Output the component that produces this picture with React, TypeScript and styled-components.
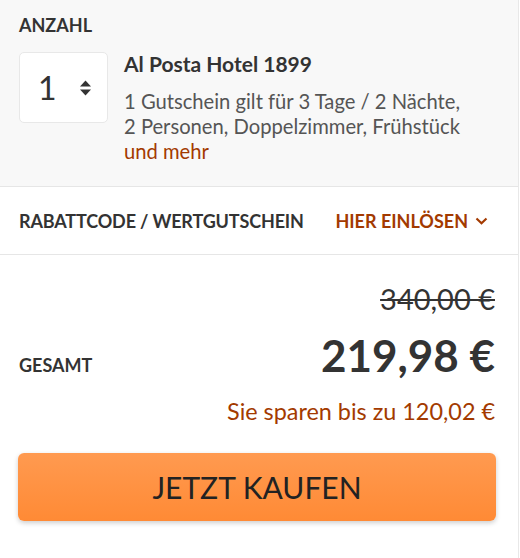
import * as React from 'react'
import styled, { createGlobalStyle } from 'styled-components'

const GlobalStyle = createGlobalStyle`
  html, body {
    margin: 0;
    padding: 0;
    background: #fff;
  }
  body {
    font-family: Lato, "Open Sans", sans-serif;
    color: #333;
  }
`

const Panel = styled.div`
  width: 519px;
  border-right: 1px solid #e8e8e8;
  box-sizing: border-box;
  min-height: 558px;
`

const Section = styled.div<{ $grey?: boolean }>`
  background: ${p => (p.$grey ? '#f8f8f8' : '#fff')};
  border-bottom: 1px solid #e6e6e6;
  padding: ${p => (p.$grey ? '14px 19px 22px' : '0 19px')};
`

const Label = styled.div<{ $tight?: boolean }>`
  font-size: 18px;
  font-weight: 700;
  color: #333;
  line-height: 22px;
  letter-spacing: ${p => (p.$tight ? '-0.15px' : '0')};
`

const ItemRow = styled.div`
  display: flex;
  gap: 16px;
  margin-top: 16px;
`

const QtyBox = styled.div`
  width: 89px;
  height: 71px;
  flex: none;
  box-sizing: border-box;
  background: #fff;
  border: 1px solid #e8e8e8;
  border-radius: 5px;
  display: flex;
  align-items: center;
  padding-left: 18px;
  gap: 22px;
  font-size: 32px;
  line-height: 1;
  color: #333;
`

const ItemInfo = styled.div``

const ItemTitle = styled.div`
  font-size: 21px;
  font-weight: 700;
  color: #333;
  line-height: 24px;
`

const ItemText = styled.div`
  margin-top: 13px;
  font-size: 20.2px;
  line-height: 25px;
  color: #555;
`

const MoreLink = styled.span`
  color: #a33a00;
`

const CodeRow = styled.div`
  display: flex;
  align-items: center;
  justify-content: space-between;
  height: 67px;
  padding-right: 11px;
`

const CodeLink = styled.div`
  display: flex;
  align-items: center;
  gap: 7px;
  font-size: 18px;
  line-height: 22px;
  font-weight: 700;
  color: #a33a00;
`

const TotalSection = styled.div`
  padding: 27px 23px 0 19px;
`

const TotalRow = styled.div`
  display: flex;
  justify-content: space-between;
  align-items: flex-end;
`

const TotalLabel = styled.div`
  font-size: 18px;
  line-height: 22px;
  font-weight: 700;
  color: #333;
  padding-bottom: 5px;
`

const Prices = styled.div`
  display: flex;
  flex-direction: column;
  align-items: flex-end;
`

const OldPrice = styled.div`
  font-size: 29px;
  line-height: 34px;
  color: #333;
  text-decoration: line-through;
  text-decoration-thickness: 2px;
`

const NewPrice = styled.div`
  font-size: 44px;
  font-weight: 700;
  line-height: 52px;
  margin-top: 13px;
  color: #333;
`

const Savings = styled.div`
  text-align: right;
  font-size: 23.4px;
  line-height: 28px;
  color: #a33a00;
  margin-top: 16px;
`

const BuyButton = styled.button`
  display: block;
  width: 478px;
  height: 68px;
  margin: 28px 0 0 18px;
  border: none;
  border-radius: 6px;
  background: linear-gradient(#ff9a50, #ff8a35);
  box-shadow: 0 2px 5px rgba(0, 0, 0, 0.2);
  font-family: Lato, sans-serif;
  font-size: 30px;
  color: #222;
`

const Spinner = () => (
  <svg width="13" height="16" viewBox="0 0 13 16">
    <path d="M6.5 0.5 L12 6.5 H1 Z" fill="#333" />
    <path d="M6.5 15.5 L12 9.5 H1 Z" fill="#333" />
  </svg>
)

const Chevron = () => (
  <svg width="13" height="8" viewBox="0 0 13 8">
    <path d="M1.5 1.5 L6.5 6.2 L11.5 1.5" fill="none" stroke="#a33a00" strokeWidth="2.2" />
  </svg>
)

export default function App() {
  return (
    <>
      <GlobalStyle />
      <Panel>
        <Section $grey>
          <Label>ANZAHL</Label>
          <ItemRow>
            <QtyBox>
              <span>1</span>
              <Spinner />
            </QtyBox>
            <ItemInfo>
              <ItemTitle>Al Posta Hotel 1899</ItemTitle>
              <ItemText>
                1 Gutschein gilt für 3 Tage / 2 Nächte,
                <br />
                2 Personen, Doppelzimmer, Frühstück
                <br />
                <MoreLink>und mehr</MoreLink>
              </ItemText>
            </ItemInfo>
          </ItemRow>
        </Section>
        <Section>
          <CodeRow>
            <Label $tight>RABATTCODE / WERTGUTSCHEIN</Label>
            <CodeLink>
              HIER EINLÖSEN
              <Chevron />
            </CodeLink>
          </CodeRow>
        </Section>
        <TotalSection>
          <TotalRow>
            <TotalLabel>GESAMT</TotalLabel>
            <Prices>
              <OldPrice>340,00 €</OldPrice>
              <NewPrice>219,98 €</NewPrice>
            </Prices>
          </TotalRow>
          <Savings>Sie sparen bis zu 120,02 €</Savings>
        </TotalSection>
        <BuyButton>JETZT KAUFEN</BuyButton>
      </Panel>
    </>
  )
}
